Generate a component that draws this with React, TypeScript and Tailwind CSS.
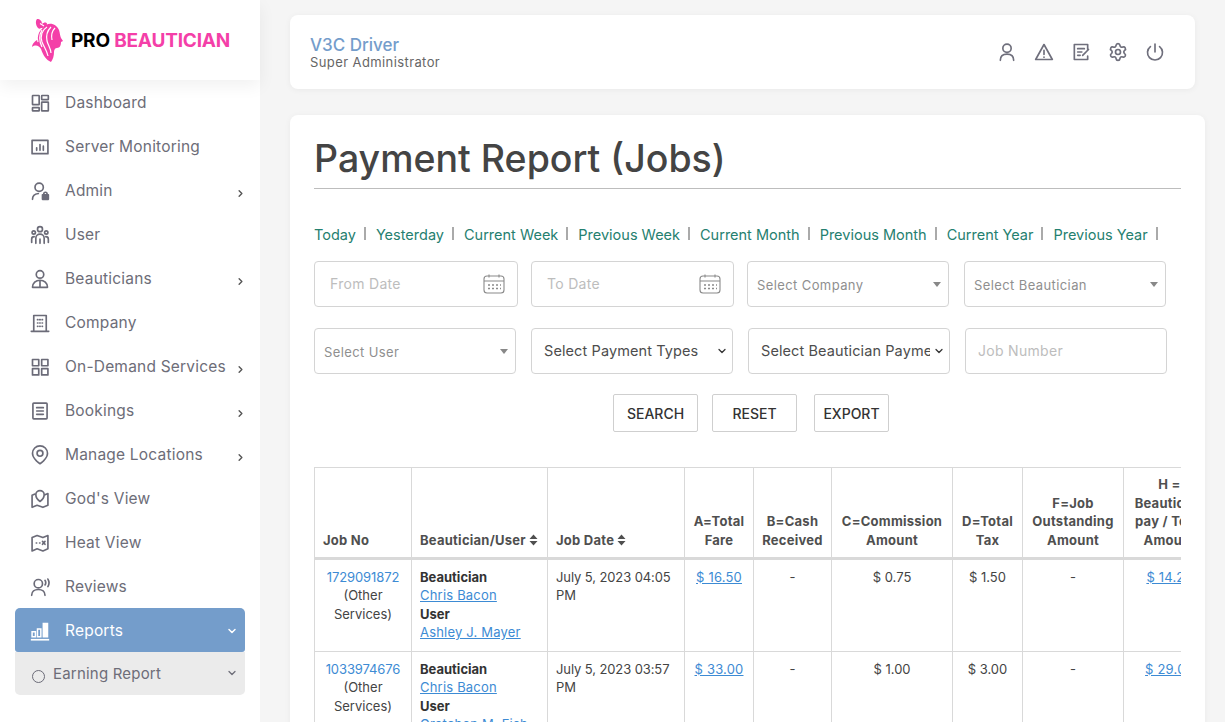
import { ChevronDown, ChevronRight, Settings } from "lucide-react";
import type { ReactNode } from "react";

const Svg = ({ children, size = 20 }: { children: ReactNode; size?: number }) => (
  <svg width={size} height={size} viewBox="0 0 24 24" fill="none" stroke="currentColor" strokeWidth="2" strokeLinecap="round" strokeLinejoin="round">
    {children}
  </svg>
);

const icons: Record<string, ReactNode> = {
  dashboard: (
    <Svg>
      <rect x="3" y="3" width="8" height="11" rx="0.5" />
      <rect x="3" y="17.500" width="8" height="4" rx="0.5" />
      <rect x="14" y="3" width="8" height="5" rx="0.5" />
      <rect x="14" y="11" width="8" height="10.500" rx="0.5" />
    </Svg>
  ),
  monitor: (
    <Svg>
      <rect x="2.500" y="4" width="19" height="16" />
      <path d="M8 16v-3M12 16V9M16 16v-5" />
    </Svg>
  ),
  admin: (
    <Svg>
      <circle cx="11" cy="7.500" r="5" />
      <path d="M3 22c0-4 3-6.500 7-7" />
      <rect x="15" y="16.500" width="7" height="5.500" fill="currentColor" />
      <path d="M16.500 16.500v-1a2 2 0 0 1 4 0v1" />
    </Svg>
  ),
  user: (
    <Svg>
      <circle cx="12" cy="5" r="3" />
      <circle cx="4.500" cy="9" r="2" />
      <circle cx="19.500" cy="9" r="2" />
      <path d="M7 22v-6a5 5 0 0 1 10 0v6M2 21v-4c0-2 1-3 3-3M22 21v-4c0-2-1-3-3-3M12 17v5" />
    </Svg>
  ),
  beautician: (
    <Svg>
      <circle cx="12" cy="6.500" r="4.500" />
      <path d="M3 22c0-5 4-8.500 9-8.500s9 3.500 9 8.500ZM12 14v8" />
    </Svg>
  ),
  company: (
    <Svg>
      <path d="M4.500 22V3h15v19M1.500 22h21" />
      <path d="M9 8h.5M14.500 8h.5M9 12h.5M14.500 12h.5M9 16h.5M14.500 16h.5M11.700 8h.5M11.700 12h.5M11.700 16h.5" />
    </Svg>
  ),
  services: (
    <Svg>
      <rect x="3" y="3" width="7.500" height="7.500" />
      <rect x="14" y="3" width="7.500" height="7.500" />
      <rect x="3" y="14" width="7.500" height="7.500" />
      <rect x="14" y="14" width="7.500" height="7.500" />
    </Svg>
  ),
  bookings: (
    <Svg>
      <rect x="3.500" y="2.500" width="17" height="19" rx="1" />
      <path d="M8 8h8M8 12h8M8 16h8" />
    </Svg>
  ),
  location: (
    <Svg>
      <path d="M12 22.500s-9-6-9-12.500a9 9 0 0 1 18 0c0 6.500-9 12.500-9 12.500Z" />
      <circle cx="12" cy="10" r="3.500" />
    </Svg>
  ),
  gods: (
    <Svg>
      <path d="M6 6 2.500 7.500V22l6-2.500 7 2.500 6-2.500V5.500L18 7" />
      <path d="M12 15s-5-3.500-5-8a5 5 0 0 1 10 0c0 4.500-5 8-5 8Z" />
    </Svg>
  ),
  heat: (
    <Svg>
      <path d="M2.500 5.500 8.500 3l7 2.500 6-2.500v16l-6 2.500-7-2.500-6 2.500Z" />
      <path d="M7.500 12h.5M11.500 12h.5M15 10l3 3.500M18 10l-3 3.500" />
    </Svg>
  ),
  reviews: (
    <Svg>
      <circle cx="10" cy="8" r="5" />
      <path d="M2 22c0-4.500 3.500-7 8-7s8 2.500 8 7M18 4c1 1.500 1 4 0 5.500M21.500 2.500c1.500 2.500 1.500 6.500 0 9" />
    </Svg>
  ),
  reports: (
    <svg width="20" height="20" viewBox="0 0 24 24" fill="none" stroke="currentColor" strokeWidth="1.800">
      <path d="M1 22.500h22" strokeWidth="2" />
      <path d="M2.500 19v-6h4v6Z" />
      <path d="M9 19V9.500h4V19Z" />
      <path d="M16 19V3h5v16Z" fill="currentColor" />
    </svg>
  ),
};

const menu = [
  { label: "Dashboard", icon: "dashboard" },
  { label: "Server Monitoring", icon: "monitor" },
  { label: "Admin", icon: "admin", more: true },
  { label: "User", icon: "user" },
  { label: "Beauticians", icon: "beautician", more: true },
  { label: "Company", icon: "company" },
  { label: "On-Demand Services", icon: "services", more: true },
  { label: "Bookings", icon: "bookings", more: true },
  { label: "Manage Locations", icon: "location", more: true },
  { label: "God's View", icon: "gods" },
  { label: "Heat View", icon: "heat" },
  { label: "Reviews", icon: "reviews" },
];

const ranges = ["Today", "Yesterday", "Current Week", "Previous Week", "Current Month", "Previous Month", "Current Year", "Previous Year"];

const rows = [
  { no: "1729091872", user: "Ashley J. Mayer", date: "July 5, 2023 04:05 PM", fare: "$ 16.50", comm: "$ 0.75", tax: "$ 1.50", pay: "$ 14.25" },
  { no: "1033974676", user: "Gretchen M. Fish", date: "July 5, 2023 03:57 PM", fare: "$ 33.00", comm: "$ 1.00", tax: "$ 3.00", pay: "$ 29.00" },
];

function Logo() {
  return (
    <div className="flex items-center">
      <svg width="34" height="44" viewBox="0 0 34 44" className="ml-[30px] shrink-0">
        <path d="M16 7C21 4 27 7 29 12c1 3 1 6 2 8l2 3-2 1c0 3-1 6-4 6-2 0-3 2-3 4 0 4-1 7-3 10-5-2-8-7-10-13-2-3-5-5-9-2 0-3 2-5 5-7 0-6 4-11 9-15Z" fill="#f43fa8" />
        <path d="M7 1c3 0 5 2 5 5 2-2 5-2 5 0s-3 4-6 4c-1 1-2 1-3 0C6 8 5 3 7 1Z" fill="#f43fa8" />
        <path d="M17 9c-5 3-7 9-5 15 2 5 5 9 6 14M21 9c-4 4-5 9-4 14 1 4 4 8 4 12M12 12c-3 5-3 11 0 17M25 10c-3 3-4 7-3 12M8 15c-1 3-1 6 0 9M10 5.500 14 8" stroke="#fff" strokeWidth="1.200" fill="none" />
      </svg>
      <span className="ml-[7px] mt-[2px] text-[19px] font-bold tracking-[-0.2px] text-black">
        PRO <span className="text-[#f43fa8]">BEAUTICIAN</span>
      </span>
    </div>
  );
}

function Sidebar() {
  return (
    <aside className="relative h-[722px] w-[260px] shrink-0 bg-white">
      <div className="relative z-10 flex h-[80px] items-center bg-white shadow-[0_6px_16px_rgba(0,0,0,0.06)]">
        <Logo />
      </div>
      <nav className="flex flex-col">
        {menu.map((m) => (
          <div key={m.label} className="flex h-[44px] items-center pl-[30px] pr-[14px] pt-[2px] text-[#6b6b78]">
            <span className="flex w-[20px] justify-center">{icons[m.icon]}</span>
            <span className="ml-[15px] whitespace-nowrap text-[15.500px] tracking-[0.2px] text-[#6d6d78]">{m.label}</span>
            {m.more && <ChevronRight size={11} strokeWidth={3} className="ml-auto mt-[4px] text-[#555]" />}
          </div>
        ))}
        <div className="mx-[15px] flex h-[44px] items-center rounded-t-[5px] rounded-b-[3px] bg-[#749dcb] pl-[15px] pr-[7px] pt-[2px] text-white">
          <span className="flex w-[20px] justify-center">{icons.reports}</span>
          <span className="ml-[15px] text-[15.500px] tracking-[0.2px]">Reports</span>
          <ChevronDown size={12} strokeWidth={3} className="ml-auto" />
        </div>
        <div className="mx-[15px] flex h-[43px] items-center rounded-b-[5px] bg-[#ebebeb] pl-[17px] pr-[7px] pt-[2px] text-[#6d6d78]">
          <span className="mt-[3px] h-[13px] w-[13px] rounded-full border-[1.500px] border-[#6b6b78]" />
          <span className="ml-[8px] text-[15px] tracking-[0.2px]">Earning Report</span>
          <ChevronDown size={12} strokeWidth={2.500} className="mb-[4px] ml-auto" />
        </div>
      </nav>
    </aside>
  );
}

function TopBar() {
  return (
    <header className="ml-[30px] mt-[15px] flex h-[74px] w-[905px] items-center justify-between rounded-[8px] bg-white pl-[20px] pr-[30px] shadow-[0_1px_6px_rgba(0,0,0,0.05)]">
      <div>
        <div className="text-[17px] font-medium leading-[20px] text-[#749dcb]">V3C Driver</div>
        <div className="text-[13px] leading-[15px] tracking-[0.4px] text-[#666]">Super Administrator</div>
      </div>
      <div className="flex items-center gap-[17px] text-[#6f6f7c]">
        <Svg>
          <circle cx="12" cy="7.500" r="5" />
          <path d="M4 22c0-5 3.500-7.500 8-7.500s8 2.500 8 7.500" />
        </Svg>
        <Svg>
          <path d="M12 3 2 21h20Z" />
          <path d="M12 10v5M12 18v.2" />
        </Svg>
        <Svg>
          <path d="M20 9V3H4v18h16v-4" />
          <path d="M8 8h8M8 12h5M8 16h3M14 16l7-7" />
        </Svg>
        <Settings size={20} strokeWidth={2} />
        <Svg>
          <path d="M12 2.500V12M6.500 5.500a9 9 0 1 0 11 0" />
        </Svg>
      </div>
    </header>
  );
}

const CalendarIcon = () => (
  <svg width="24" height="24" viewBox="0 0 24 24" fill="none" stroke="#8a8a8a" strokeWidth="1.100">
    <rect x="2" y="4" width="20" height="17" rx="3" />
    <path d="M2 9h20M7 2.500v3M17 2.500v3" />
    <path d="M6 13h2M10 13h2M14 13h2M18 13h1M6 16.500h2M10 16.500h2M14 16.500h2M18 16.500h1" strokeWidth="1.500" />
  </svg>
);

const boxClass = "flex h-[46px] items-center rounded-[4px] border border-[#d4d4d4] bg-white";

function DateBox({ label, width }: { label: string; width: string }) {
  return (
    <div className={`${boxClass} ${width} justify-between pl-[15px] pr-[11px]`}>
      <span className="mb-[2px] text-[14px] tracking-[0.3px] text-[#bdbdbd]">{label}</span>
      <CalendarIcon />
    </div>
  );
}

function Select2({ label, width }: { label: string; width: string }) {
  return (
    <div className={`${boxClass} ${width} justify-between pl-[9px] pr-[7px]`}>
      <span className="mt-[4px] text-[13px] tracking-[0.4px] text-[#8f8f8f]">{label}</span>
      <span className="h-0 w-0 border-x-[4px] border-t-[5px] border-x-transparent border-t-[#888]" />
    </div>
  );
}

function NativeSelect({ label, width }: { label: string; width: string }) {
  return (
    <div className={`${boxClass} ${width} pl-[12px] pr-[4px]`}>
      <span className="min-w-0 flex-1 overflow-hidden whitespace-nowrap text-[14.500px] tracking-[0.1px] text-[#4d4d4d]">{label}</span>
      <ChevronDown size={12} strokeWidth={2.500} className="ml-[3px] shrink-0 text-[#333]" />
    </div>
  );
}

function Filters() {
  return (
    <div className="flex flex-col">
      <div className="mt-[36px] flex h-[20px] items-center text-[14.500px] text-[#25806f]">
        {ranges.map((r) => (
          <span key={r} className="mr-[10px] flex items-center whitespace-nowrap">
            {r}
            <span className="mb-[3px] ml-[8px] h-[13px] w-[2px] bg-[#aaa]" />
          </span>
        ))}
      </div>
      <div className="mt-[16px] flex">
        <DateBox label="From Date" width="w-[204px]" />
        <div className="ml-[13px]">
          <DateBox label="To Date" width="w-[203px]" />
        </div>
        <div className="ml-[13px]">
          <Select2 label="Select Company" width="w-[202px]" />
        </div>
        <div className="ml-[15px]">
          <Select2 label="Select Beautician" width="w-[202px]" />
        </div>
      </div>
      <div className="mt-[21px] flex">
        <Select2 label="Select User" width="w-[202px]" />
        <div className="ml-[15px]">
          <NativeSelect label="Select Payment Types" width="w-[202px]" />
        </div>
        <div className="ml-[15px]">
          <NativeSelect label="Select Beautician Payment Status" width="w-[202px]" />
        </div>
        <div className={`${boxClass} ml-[15px] w-[202px] pl-[12px]`}>
          <span className="mb-[2px] text-[14px] tracking-[0.3px] text-[#bdbdbd]">Job Number</span>
        </div>
      </div>
      <div className="mt-[20px] flex pl-[299px] text-[14px] font-medium text-[#333]">
        <button className="h-[38px] w-[85px] rounded-[2px] border border-[#cfcfcf] bg-white">SEARCH</button>
        <button className="ml-[14px] h-[38px] w-[85px] rounded-[2px] border border-[#cfcfcf] bg-white">RESET</button>
        <button className="ml-[17px] h-[38px] w-[75px] rounded-[2px] border border-[#cfcfcf] bg-white">EXPORT</button>
      </div>
    </div>
  );
}

const thClass = "border border-b-[3px] border-[#d9d9d9] px-[8px] pb-[8px] align-bottom text-[13px] font-bold leading-[18.500px] tracking-[0.25px] text-[#4f4f4f]";
const tdClass = "border border-[#d9d9d9] px-[8px] pt-[7.500px] pb-[9.500px] align-top text-[13px] leading-[18.500px] text-[#444]";
const linkClass = "tracking-[0.2px] text-[#3d8bd4] underline";

function Sort() {
  return (
    <svg width="9" height="12" viewBox="0 0 9 12" className="ml-[3px] inline-block align-[-1px]" fill="currentColor">
      <path d="M4.500 0.500 8.500 5H0.500ZM4.500 11.500 0.500 7H8.500Z" />
    </svg>
  );
}

function ReportTable() {
  return (
    <div className="mt-[35px] overflow-hidden">
      <table className="w-[901px] table-fixed border-collapse">
        <colgroup>
          <col className="w-[97px]" />
          <col className="w-[136px]" />
          <col className="w-[137px]" />
          <col className="w-[69px]" />
          <col className="w-[78px]" />
          <col className="w-[121px]" />
          <col className="w-[70px]" />
          <col className="w-[101px]" />
          <col className="w-[92px]" />
        </colgroup>
        <thead>
          <tr className="h-[91px]">
            <th className={`${thClass} text-left`}>Job No</th>
            <th className={`${thClass} whitespace-nowrap text-left`}>
              Beautician/User
              <Sort />
            </th>
            <th className={`${thClass} text-left`}>
              Job Date
              <Sort />
            </th>
            <th className={thClass}>A=Total Fare</th>
            <th className={thClass}>B=Cash Received</th>
            <th className={thClass}>C=Commission Amount</th>
            <th className={thClass}>D=Total Tax</th>
            <th className={thClass}>F=Job Outstanding Amount</th>
            <th className={thClass}>
              H =<br />
              Beautician pay / Total Amount
            </th>
          </tr>
        </thead>
        <tbody>
          {rows.map((r) => (
            <tr key={r.no} className="h-[91px]">
              <td className={`${tdClass} text-center`}>
                <span className="tracking-[-0.1px] text-[#3d8bd4]">{r.no}</span>
                <br />
                (Other Services)
              </td>
              <td className={tdClass}>
                <b className="font-bold text-[#333]">Beautician</b>
                <br />
                <a className={linkClass}>Chris Bacon</a>
                <br />
                <b className="font-bold text-[#333]">User</b>
                <br />
                <a className={linkClass}>{r.user}</a>
              </td>
              <td className={`${tdClass} tracking-[-0.1px]`}>{r.date}</td>
              <td className={`${tdClass} text-center`}>
                <a className={linkClass}>{r.fare}</a>
              </td>
              <td className={`${tdClass} text-center`}>-</td>
              <td className={`${tdClass} text-center`}>{r.comm}</td>
              <td className={`${tdClass} text-center`}>{r.tax}</td>
              <td className={`${tdClass} text-center`}>-</td>
              <td className={`${tdClass} text-center`}>
                <a className={linkClass}>{r.pay}</a>
              </td>
            </tr>
          ))}
        </tbody>
      </table>
    </div>
  );
}

export default function App() {
  return (
    <div className="flex h-[722px] overflow-hidden bg-[#f5f5f5] [font-family:Inter,sans-serif]">
      <Sidebar />
      <main className="min-w-0 flex-1">
        <TopBar />
        <section className="ml-[30px] mt-[26px] w-[915px] rounded-[8px] bg-white px-[24px] pb-[30px] pt-[20px] shadow-[0_1px_6px_rgba(0,0,0,0.05)]">
          <h1 className="border-b border-[#bdbdbd] pb-[5px] text-[37.500px] font-medium leading-[48px] text-[#444]">Payment Report (Jobs)</h1>
          <Filters />
          <ReportTable />
        </section>
      </main>
    </div>
  );
}
